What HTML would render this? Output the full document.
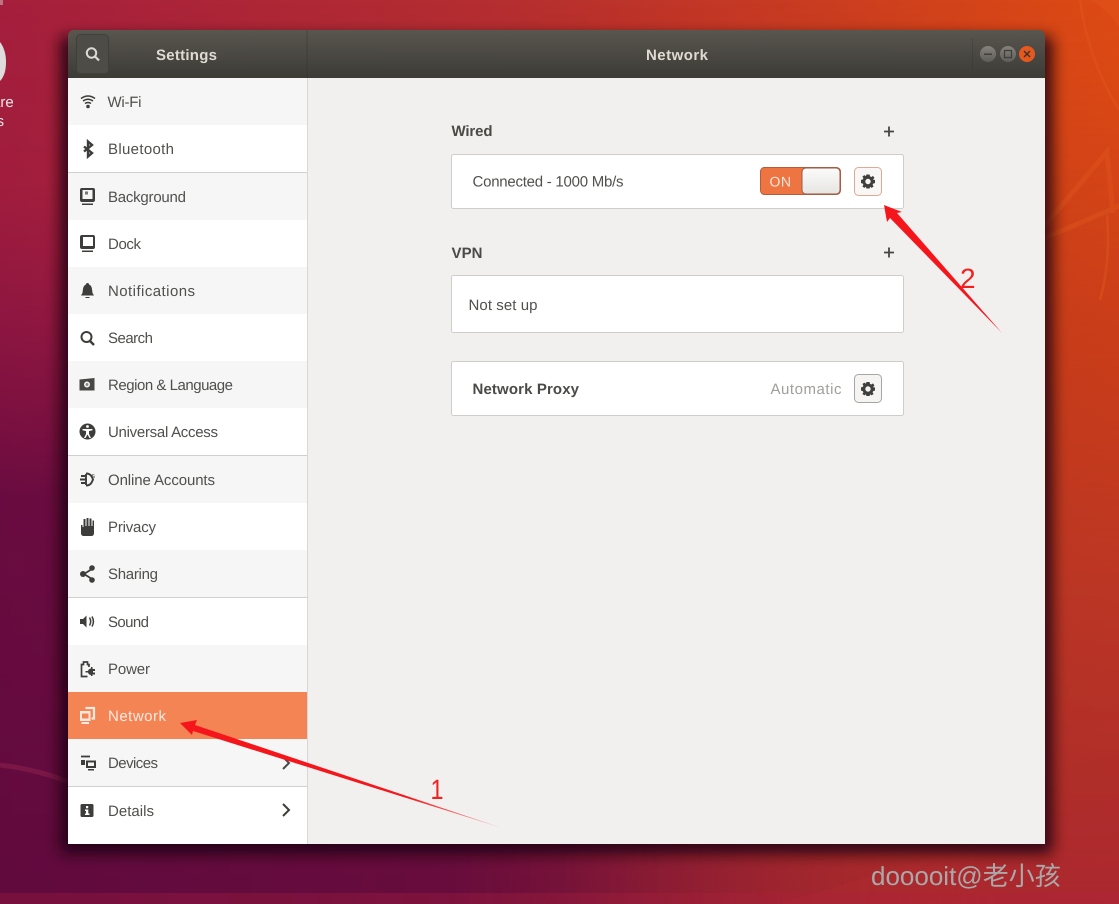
<!DOCTYPE html>
<html>
<head>
<meta charset="utf-8">
<style>
html,body{margin:0;padding:0;width:1119px;height:904px;overflow:hidden;background:#800f3c}
svg{display:block}
text{font-family:"Liberation Sans","Noto Sans CJK SC",sans-serif;text-rendering:geometricPrecision}
.r{font-size:15px;fill:#50504d}
.b{font-size:15px;font-weight:bold;fill:#4a4a47}
.t{font-size:15px;font-weight:bold;fill:#dfdbd2}
.i{fill:#3d3d3b}
.s{fill:none;stroke:#3d3d3b}
</style>
</head>
<body>
<svg width="1119" height="904" viewBox="0 0 1119 904" xmlns="http://www.w3.org/2000/svg">
<defs>
<linearGradient id="bg" x1="0" y1="0" x2="1" y2="0">
<stop offset="0" stop-color="#a51f3d"/><stop offset=".45" stop-color="#b52e30"/><stop offset=".93" stop-color="#d84716"/><stop offset="1" stop-color="#dd4a14"/>
</linearGradient>
<linearGradient id="bg2" x1="0" y1="0" x2="0" y2="1">
<stop offset="0" stop-color="#7a0c48" stop-opacity="0"/><stop offset=".2" stop-color="#7a0c48" stop-opacity=".08"/><stop offset=".55" stop-color="#640a40" stop-opacity=".92"/><stop offset="1" stop-color="#600a3e" stop-opacity="1"/>
</linearGradient>
<linearGradient id="fadeR" x1="0" y1="0" x2="1" y2="0">
<stop offset="0" stop-color="#fff"/><stop offset=".5" stop-color="#fff" stop-opacity=".9"/><stop offset=".95" stop-color="#fff" stop-opacity="0"/>
</linearGradient>
<mask id="m"><rect width="1119" height="904" fill="url(#fadeR)"/></mask>
<linearGradient id="fadeL" x1="0" y1="0" x2="1" y2="0">
<stop offset=".4" stop-color="#fff" stop-opacity="0"/><stop offset=".9" stop-color="#fff" stop-opacity="1"/>
</linearGradient>
<mask id="m2"><rect width="1119" height="904" fill="url(#fadeL)"/></mask>
<linearGradient id="br" x1="0" y1="0" x2="0" y2="1">
<stop offset="0" stop-color="#b2273a" stop-opacity="0"/><stop offset=".08" stop-color="#b8301f" stop-opacity=".05"/><stop offset=".35" stop-color="#b4301f" stop-opacity=".45"/><stop offset=".65" stop-color="#b0302a" stop-opacity=".75"/><stop offset="1" stop-color="#a5262e" stop-opacity=".95"/>
</linearGradient>
<linearGradient id="head" x1="0" y1="0" x2="0" y2="1">
<stop offset="0" stop-color="#595650"/><stop offset="1" stop-color="#3d3b36"/>
</linearGradient>
<linearGradient id="sw" x1="0" y1="0" x2="0" y2="1">
<stop offset="0" stop-color="#fbfbfa"/><stop offset="1" stop-color="#e6e5e2"/>
</linearGradient>
<linearGradient id="wb" x1="0" y1="0" x2="0" y2="1">
<stop offset="0" stop-color="#85827c"/><stop offset="1" stop-color="#5f5d58"/>
</linearGradient>
<linearGradient id="ar1" gradientUnits="userSpaceOnUse" x1="180" y1="723" x2="502" y2="828">
<stop offset="0" stop-color="#f5161c"/><stop offset=".7" stop-color="#f5161c"/><stop offset="1" stop-color="#f5161c" stop-opacity=".3"/>
</linearGradient>
<filter id="blur" x="-10%" y="-10%" width="120%" height="120%"><feGaussianBlur stdDeviation="7"/></filter>
<g id="gear">
<path fill-rule="evenodd" d="M-1.6-7H1.600L2-5.100 3.400-4.500 5-5.600 6.400-3.600 5.200-2.100 5.400-1.600 7-1.600V1.600L5.300 2 4.600 3.400 5.600 5 3.600 6.400 2.100 5.200 1.600 7H-1.600L-2.100 5.200-3.600 6.400-5.600 5-4.600 3.400-5.300 2-7 1.600V-1.600L-5.300-2-4.600-3.400-5.600-5-3.600-6.400-2.100-5.200ZM0-2.700A2.700 2.700 0 1 0 0 2.700 2.700 2.700 0 1 0 0-2.700Z" fill="#3f3f3d"/>
</g>
</defs>

<!-- wallpaper -->
<rect width="1119" height="904" fill="url(#bg)"/>
<rect width="1119" height="904" fill="url(#bg2)" mask="url(#m)"/>
<rect width="1119" height="904" fill="url(#br)" mask="url(#m2)"/>
<path d="M780 904 1119 800V904Z" fill="#b52a35" opacity=".25"/>
<path d="M0 893H1119V904H0Z" fill="#b0223f" opacity=".3"/>
<path d="M1080 0Q1088 60 1119 110M1107 215Q1111 260 1100 300" fill="none" stroke="#e0581f" stroke-width="2.500" opacity=".45"/>
<path d="M1045 225 1107 152 1113 213M1045 238 1119 206" fill="none" stroke="#e0581f" stroke-width="5" opacity=".4"/>
<path d="M1090 0H1119V26Q1105 8 1090 0Z" fill="#e2511a" opacity=".6"/>
<path d="M0 765Q40 770 68 782" fill="none" stroke="#9c2a55" stroke-width="5" opacity=".4"/>

<!-- desktop icon remnant -->
<path d="M0 42Q6 50 6 62 6 75 0 81Z" fill="#dedcdc"/>
<text x="-8" y="107" font-size="15" fill="#f1e6e6">are</text>
<text x="-3.500" y="126" font-size="15" fill="#f1e6e6">s</text>
<rect x="0" y="0" width="3" height="5" fill="#d8c8c8" opacity=".5"/>

<!-- window shadow -->
<rect x="60" y="36" width="993" height="818" rx="6" fill="#140609" opacity=".8" filter="url(#blur)"/>

<!-- window -->
<path d="M68 36a6 6 0 0 1 6-6H1039a6 6 0 0 1 6 6V78H68Z" fill="url(#head)"/>
<rect x="68" y="78" width="977" height="766" fill="#f2f0ee"/>
<rect x="306.500" y="30" width="1" height="48" fill="#33312d" opacity=".45"/>
<rect x="972" y="38" width="1" height="32" fill="#33312d" opacity=".3"/>

<!-- search button -->
<rect x="76.500" y="34.500" width="32" height="39" rx="4" fill="#4e4c47" stroke="#413f3a"/>
<circle cx="91.500" cy="53" r="4.700" fill="none" stroke="#dedbd4" stroke-width="2"/>
<path d="M95 56.500 99 60.500" stroke="#dedbd4" stroke-width="2.200" fill="none"/>
<text class="t" x="156" y="60" textLength="61" lengthAdjust="spacing">Settings</text>
<text class="t" x="646" y="60" textLength="62" lengthAdjust="spacing">Network</text>

<!-- window buttons -->
<circle cx="988" cy="54" r="8" fill="url(#wb)"/><rect x="984" y="53.500" width="8" height="1.500" fill="#3f3d39"/>
<circle cx="1008" cy="54" r="8" fill="url(#wb)"/><rect x="1004.500" y="50.500" width="7" height="7" fill="none" stroke="#3f3d39" stroke-width="1.200"/>
<circle cx="1027" cy="54" r="8" fill="#e5591f"/><path d="M1024 51 1030 57M1030 51 1024 57" stroke="#45312a" stroke-width="1.500"/>

<!-- sidebar -->
<rect x="68" y="78" width="239" height="766" fill="#fff"/>
<rect x="307" y="78" width="1" height="766" fill="#d9d7d4"/>
<rect x="68" y="78" width="239" height="47" fill="#f6f6f6"/>
<rect x="68" y="173" width="239" height="47" fill="#f6f6f6"/>
<rect x="68" y="267" width="239" height="47" fill="#f6f6f6"/>
<rect x="68" y="361" width="239" height="47" fill="#f6f6f6"/>
<rect x="68" y="456" width="239" height="47" fill="#f6f6f6"/>
<rect x="68" y="550" width="239" height="47" fill="#f6f6f6"/>
<rect x="68" y="645" width="239" height="47" fill="#f6f6f6"/>
<rect x="68" y="692" width="239" height="47" fill="#f58455"/>
<rect x="68" y="739" width="239" height="47" fill="#f6f6f6"/>
<rect x="68" y="172" width="239" height="1" fill="#d2d0cd"/>
<rect x="68" y="455" width="239" height="1" fill="#d2d0cd"/>
<rect x="68" y="597" width="239" height="1" fill="#d2d0cd"/>
<rect x="68" y="786" width="239" height="1" fill="#d2d0cd"/>

<!-- labels -->
<text class="r" x="107.500" y="107" textLength="34" lengthAdjust="spacing">Wi-Fi</text>
<text class="r" x="108" y="154" textLength="66" lengthAdjust="spacing">Bluetooth</text>
<text class="r" x="108" y="202" textLength="78" lengthAdjust="spacing">Background</text>
<text class="r" x="108" y="249" textLength="33" lengthAdjust="spacing">Dock</text>
<text class="r" x="108" y="296" textLength="87" lengthAdjust="spacing">Notifications</text>
<text class="r" x="108" y="343" textLength="45" lengthAdjust="spacing">Search</text>
<text class="r" x="108" y="390" textLength="125" lengthAdjust="spacing">Region &amp; Language</text>
<text class="r" x="108" y="437" textLength="110" lengthAdjust="spacing">Universal Access</text>
<text class="r" x="108" y="485" textLength="107" lengthAdjust="spacing">Online Accounts</text>
<text class="r" x="108" y="532" textLength="48" lengthAdjust="spacing">Privacy</text>
<text class="r" x="108" y="579" textLength="50" lengthAdjust="spacing">Sharing</text>
<text class="r" x="108" y="627" textLength="41" lengthAdjust="spacing">Sound</text>
<text class="r" x="108" y="674" textLength="42" lengthAdjust="spacing">Power</text>
<text x="108" y="721" font-size="15" fill="#fde9e0" textLength="58" lengthAdjust="spacing">Network</text>
<text class="r" x="108" y="768" textLength="50" lengthAdjust="spacing">Devices</text>
<text class="r" x="108" y="816" textLength="46" lengthAdjust="spacing">Details</text>

<!-- chevrons -->
<path d="M283 757 289 763 283 769" fill="none" stroke="#4a4a48" stroke-width="2"/>
<path d="M283 804 289 810 283 816" fill="none" stroke="#3d3d3b" stroke-width="2"/>

<!-- icons -->
<!-- wifi -->
<g class="s" stroke-width="1.500">
<path d="M81 98.500Q88 93.500 95 98.500"/><path d="M83 101Q88 97.500 93 101"/><path d="M85 103.500Q88 101.500 91 103.500"/>
</g>
<circle cx="88" cy="106.500" r="1.800" class="i"/>
<!-- bluetooth -->
<path d="M84 146.500 92 153 88 156.500V141.500L92 145 84 151.500" fill="none" stroke="#3d3d3b" stroke-width="2.400"/>
<!-- background -->
<path fill-rule="evenodd" d="M82 188H93a2 2 0 0 1 2 2V200a2 2 0 0 1-2 2H82a2 2 0 0 1-2-2V190a2 2 0 0 1 2-2ZM82.500 190V199H92.500V190Z" class="i"/>
<rect x="82" y="203.500" width="11" height="1.500" class="i"/>
<rect x="85" y="191.500" width="3" height="3" fill="#777"/>
<!-- dock -->
<path fill-rule="evenodd" d="M82 235H93a2 2 0 0 1 2 2V247a2 2 0 0 1-2 2H82a2 2 0 0 1-2-2V237a2 2 0 0 1 2-2ZM83 237V246H93V237Z" class="i"/>
<rect x="82" y="250.500" width="11" height="1.500" class="i"/>
<!-- bell -->
<path d="M87.500 283a1.500 1.500 0 0 1 1.500 1.500C92 285.500 92 289 92.500 293L94 295.500H81L82.500 293C83 289 83 285.500 86 284.500A1.500 1.500 0 0 1 87.500 283ZM85.500 297H89.500V298H85.500Z" class="i"/>
<!-- search -->
<circle cx="86.500" cy="337" r="5" fill="none" stroke="#3d3d3b" stroke-width="2"/>
<path d="M90 341 94 345" stroke="#3d3d3b" stroke-width="2.400"/>
<!-- region -->
<path fill-rule="evenodd" d="M79.500 379.500 94.500 378V390.500H79.500ZM87 381.500A3 3 0 1 0 87 387.500 3 3 0 1 0 87 381.500Z" fill="#474745"/>
<circle cx="87" cy="384.500" r="1.500" fill="#8a8a88"/>
<!-- universal access -->
<circle cx="87.500" cy="431.500" r="8" class="i"/>
<path d="M82.500 429 92.500 429 92.500 430.200 89 431V434L91 438H89.500L87.500 434.500 85.500 438H84L86 434V431L82.500 430.200Z" fill="#fff"/>
<circle cx="87.500" cy="426.500" r="1.400" fill="#fff"/>
<!-- online accounts -->
<path d="M86 473.500C91 473.500 92 477 93 479.500 92 482 91 485.500 86 485.500M86 474V485M81 476H86M80 479.500H86M81 483H86" fill="none" stroke="#3d3d3b" stroke-width="1.900"/>
<text x="91.500" y="478" font-size="7" fill="#3d3d3b">s</text>
<!-- privacy -->
<path d="M81 525V533C81 535 82 536 84 536H91C93 536 94 535 94 533V520.500H92.500V526H91.500V518.500H89.500V526H88.500V518H86.500V526H85.500V519H83.500V527H82.500V525Z" class="i"/>
<!-- share -->
<path d="M92 569 84 574 92 579" fill="none" stroke="#3d3d3b" stroke-width="1.800"/>
<circle cx="92" cy="568" r="2.800" class="i"/><circle cx="83" cy="574" r="3" class="i"/><circle cx="92" cy="580" r="2.800" class="i"/>
<!-- sound -->
<path d="M80 619H83L86.500 615.500V627.500L83 624H80Z" class="i"/>
<path d="M89.500 617.500C91 620 91 623 89.500 625.500M92 616.500C94 620 94 623 92 626.500" fill="none" stroke="#3d3d3b" stroke-width="1.500"/>
<!-- power -->
<path d="M87.500 676.500H81.500V664.500H83.500V662H87.500V664.500H89V667" fill="none" stroke="#3d3d3b" stroke-width="1.700"/>
<path d="M88 671A3.500 3.500 0 0 1 91 668.500V667H92.500V669H95V671H93V672.500H95V674.500H92.500V676H91V675A3.500 3.500 0 0 1 88 672.500H85.500V671Z" class="i"/>
<!-- network -->
<path fill-rule="evenodd" d="M80 711H90.500V721H80ZM82 713.500V718.500H88.500V713.500Z" fill="#fde9e0"/>
<path d="M81.500 722H89V724H81.500Z" fill="#fde9e0"/>
<path d="M86.500 709V708H94V718.500H91.500" fill="none" stroke="#fde9e0" stroke-width="2.200"/>
<!-- devices -->
<path d="M81 756.500H90" stroke="#3d3d3b" stroke-width="1.800"/>
<path d="M81 760H85V765H81Z" class="i"/>
<path fill-rule="evenodd" d="M86 760.500H96V768H86ZM88 762.500V766H94V762.500Z" class="i"/>
<rect x="88" y="769" width="6" height="1.500" class="i"/>
<!-- info -->
<path fill-rule="evenodd" d="M82 804H92a1.500 1.500 0 0 1 1.500 1.500V815.500a1.500 1.500 0 0 1-1.500 1.500H82a1.500 1.500 0 0 1-1.500-1.500V805.500A1.500 1.500 0 0 1 82 804ZM86 806V808.200H88.200V806ZM85 809.500V811H86V813.500H85V815H89.500V813.500H88.300V809.500Z" class="i"/>

<!-- Wired -->
<text class="b" x="451.500" y="136" textLength="41" lengthAdjust="spacing">Wired</text>
<path d="M884 131.500H894M889 126.500V136.500" stroke="#454543" stroke-width="1.800"/>
<rect x="451.500" y="154.500" width="452" height="54" rx="2" fill="#fff" stroke="#cfcdca"/>
<text class="r" x="472.500" y="186.500" textLength="151" lengthAdjust="spacing">Connected - 1000 Mb/s</text>
<rect x="760.500" y="167.500" width="80" height="27" rx="4" fill="#ee7541" stroke="#b45d3d"/>
<text x="769.500" y="186.500" font-size="14" fill="#fbe7dc" textLength="21.500" lengthAdjust="spacing">ON</text>
<rect x="802" y="168" width="38" height="26" rx="4" fill="url(#sw)" stroke="#9a5a48"/>
<rect x="854.500" y="167.500" width="27" height="28" rx="4" fill="#f8f7f6" stroke="#e0a993"/>
<use href="#gear" x="868" y="181.500"/>

<!-- VPN -->
<text class="b" x="451.500" y="258" textLength="31" lengthAdjust="spacing">VPN</text>
<path d="M884 252.500H894M889 247.500V257.500" stroke="#454543" stroke-width="1.800"/>
<rect x="451.500" y="275.500" width="452" height="57" rx="2" fill="#fff" stroke="#cfcdca"/>
<text class="r" x="468.500" y="310" textLength="69" lengthAdjust="spacing">Not set up</text>

<!-- Proxy -->
<rect x="451.500" y="361.500" width="452" height="54" rx="2" fill="#fff" stroke="#cfcdca"/>
<text class="b" x="472.500" y="394" textLength="106.500" lengthAdjust="spacing">Network Proxy</text>
<text x="770.500" y="394" font-size="15" fill="#a09f9c" textLength="71" lengthAdjust="spacing">Automatic</text>
<rect x="854.500" y="374.500" width="27" height="28" rx="4" fill="#f5f4f2" stroke="#a8a6a2"/>
<use href="#gear" x="868" y="389"/>

<!-- annotations -->
<path d="M180 723 197 720 195 725 502 828 193 731 192 735Z" fill="url(#ar1)"/>
<path d="M884 205 902 212 897 213 1002 333 890 218 887 222Z" fill="#f5161c"/>
<text x="430.500" y="799" font-size="28" fill="#f02020" textLength="13" lengthAdjust="spacingAndGlyphs">1</text>
<text x="960" y="288" font-size="28" fill="#f02020">2</text>

<!-- watermark -->
<text x="871" y="885" font-size="26" fill="#aaa8a8">dooooit@老小孩</text>
</svg>
</body>
</html>
